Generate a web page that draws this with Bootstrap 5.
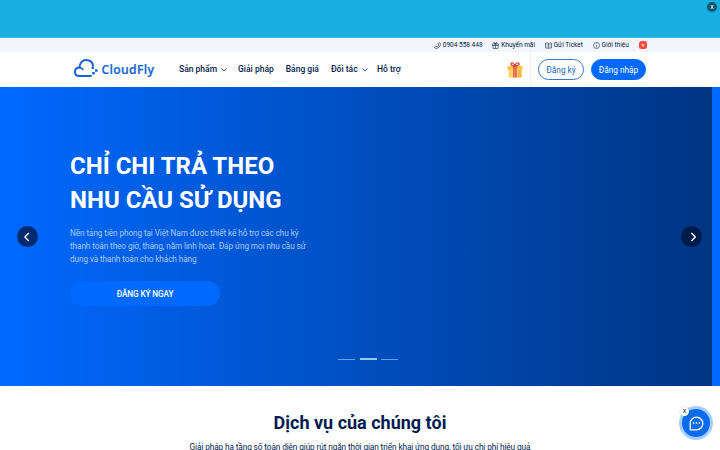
<!DOCTYPE html>
<html lang="vi">
  <head>
    <meta charset="utf-8" />
    <meta name="viewport" content="width=device-width, initial-scale=1" />
    <title>CloudFly</title>
    <link
      href="https://cdn.jsdelivr.net/npm/bootstrap@5.3.1/dist/css/bootstrap.min.css"
      rel="stylesheet"
    />
    <style>
      body {
        font-family: Roboto, "Noto Sans", sans-serif;
        color: #011b4f;
        height: 450px;
        overflow: hidden;
      }
      svg { display: block; flex: none; }
      .promo { height: 38px; background: #18aee1; border-bottom: 1px solid #45b6dc; }
      .promo-close {
        width: 10px; height: 10px; top: 2px; right: 3px;
        background: #0b5770; color: #fff; font-size: 7px; line-height: 10px;
      }
      .topbar { height: 14px; background: #f3f5fa; font-size: 6.5px; line-height: 14px; padding-right: 73.5px; gap: 9.7px; }
      .topbar a, .main-nav a { color: inherit; text-decoration: none; white-space: nowrap; }
      .topbar a { gap: 2px; }
      .flag { width: 8px; height: 8px; border-radius: 2.5px; background: #f94a49; }
      .header { height: 35px; padding: 0 74px 0 73px; }
      .brand { width: 106px; }
      .brand-logo { margin-top: -4px; }
      .brand-name { font: 600 12.2px/16px "Open Sans", sans-serif; letter-spacing: .3px; color: #1663d6; margin-left: 3.5px; -webkit-text-stroke: .2px #1663d6; }
      .main-nav { font-size: 8.5px; font-weight: 500; gap: 12px; }
      .main-nav .has-menu { gap: 4px; margin-right: -1px; }
      .main-nav .partner { margin-right: -2.5px; }
      .split { width: 1px; height: 35px; background: #f0f2f6; margin: 0 7px; }
      .pill { height: 21px; padding: 0; font-size: 8.25px; line-height: 20px; border-radius: 11px; }
      .pill-line { width: 46px; color: #1663b8; border-color: #3479c5; }
      .pill-fill { width: 55px; margin-left: 7px; background: #0069ff; color: #fff; border-color: #0069ff; }
      .hero { height: 298.5px; background: #0069ff; }
      .slide { width: 712px; height: 298.5px; background: linear-gradient(90deg, #0069ff, #003583); }
      .slide-text { padding: 62px 0 0 70px; }
      .slide-text h1 { font-size: 24px; line-height: 34px; font-weight: 700; margin-bottom: 10px; }
      .slide-text p { font-size: 8.25px; line-height: 13px; letter-spacing: -.11px; color: #a9c9fa; margin-bottom: 14.5px; }
      .cta { width: 150px; height: 25px; padding: 0; border: 0; border-radius: 13px; background: #0069ff; color: #fff; font-size: 8.25px; letter-spacing: -.13px; font-weight: 500; line-height: 26px; }
      .arrow { width: 21px; height: 21px; top: 139px; background: rgba(0, 15, 45, .68); }
      .arrow-prev { left: 17.4px; }
      .arrow-next { left: 681.4px; }
      .dashes { top: 271px; left: 338px; gap: 4.5px; }
      .dashes span { width: 17px; height: 1px; background: #6ca3ea; }
      .dashes .on { height: 2px; background: #8fcbe4; }
      .services h2 { font-size: 18px; line-height: 22px; font-weight: 700; margin: 26px 0 8px; }
      .services p { font-size: 8.25px; line-height: 11px; letter-spacing: -.11px; white-space: nowrap; }
      .chat { width: 34px; height: 34px; left: 679px; top: 406px; background: #a9ccff; }
      .chat-core { width: 28px; height: 28px; background: #0b6bed; }
      .chat-close { width: 9px; height: 9px; left: 1px; top: 1px; background: #fff; color: #222; font-size: 7px; line-height: 8px; box-shadow: 0 0 2px rgba(0, 0, 0, .25); }
    </style>
    <script src="https://cdn.jsdelivr.net/npm/bootstrap@5.3.1/dist/js/bootstrap.bundle.min.js"></script>
  </head>
  <body>
    <div class="promo position-relative">
      <span class="promo-close position-absolute rounded-circle text-center">x</span>
    </div>

    <div class="topbar d-flex justify-content-end align-items-center">
      <a href="#" class="d-flex align-items-center">
        <svg width="7" height="7" viewBox="0 0 14 14" fill="none" stroke="#273962" stroke-width="1.3"><path d="M10 1l3 2c0 6-4 10-10 10l-2-3 3-2 2 2c2-1 3-2 4-4L8 4z" /></svg>
        0904 558 448
      </a>
      <a href="#" class="d-flex align-items-center">
        <svg width="7" height="7" viewBox="0 0 14 14" fill="none" stroke="#273962" stroke-width="1.3"><path d="M1 4h12v3H1zM2 7v6h10V7M7 4v9M7 4C2 4 3 0 5 1q2 1 2 3c0-3 2-4 3-3s1 3-3 3" /></svg>
        Khuyến mãi
      </a>
      <a href="#" class="d-flex align-items-center">
        <svg width="7" height="7" viewBox="0 0 14 14" fill="none" stroke="#273962" stroke-width="1.3"><path d="M1 2h4l2 1 2-1h4v10H9l-2 1-2-1H1zM7 3v10M3 5h2M3 8h2M9 5h2M9 8h2" /></svg>
        Gửi Ticket
      </a>
      <a href="#" class="d-flex align-items-center">
        <svg width="7" height="7" viewBox="0 0 14 14" fill="none" stroke="#273962" stroke-width="1.3"><circle cx="7" cy="7" r="6" /><path d="M7 6v5M7 3v1.5" /></svg>
        Giới thiệu
      </a>
      <span class="flag d-flex align-items-center justify-content-center">
        <svg width="4" height="4" viewBox="0 0 10 10" fill="#ffe36b"><path d="M5 0l1.4 3.5L10 3.8 7.2 6.1 8.1 10 5 7.8 1.9 10l.9-3.9L0 3.8l3.6-.3z" /></svg>
      </span>
    </div>

    <header class="header d-flex align-items-center bg-white">
      <a href="#" class="brand d-flex align-items-center text-decoration-none">
        <svg class="brand-logo" width="25" height="20" viewBox="0 0 25 20" fill="none" stroke="#1663d6" stroke-width="2" stroke-linecap="round"><path d="M18 18H6C3 18 2 16 2 14c0-3 2-4.5 4.5-4.5C6.500 5 9.500 2 13 2c4 0 6.500 2.500 7 5.500" /><path d="M6 9.500c2 0 3 .7 4 2" stroke-width="1.6" /><path d="M18.600 8.600h2.400V11h-2.400zM22 11.200h2.600v2.600H22zM19.200 14h2.600v2.600h-2.600z" fill="#1663d6" stroke="none" /></svg>
        <span class="brand-name">CloudFly</span>
      </a>
      <nav class="main-nav d-flex align-items-center">
        <a href="#" class="has-menu d-flex align-items-center">Sản phẩm <svg width="6" height="5" viewBox="0 0 6 5" fill="none" stroke="#34456c" stroke-width=".9"><path d="M.5 1.5L3 4l2.5-2.5" /></svg></a>
        <a href="#">Giải pháp</a>
        <a href="#">Bảng giá</a>
        <a href="#" class="has-menu partner d-flex align-items-center">Đối tác <svg width="6" height="5" viewBox="0 0 6 5" fill="none" stroke="#34456c" stroke-width=".9"><path d="M.5 1.5L3 4l2.5-2.5" /></svg></a>
        <a href="#">Hỗ trợ</a>
      </nav>
      <div class="d-flex align-items-center ms-auto">
        <svg width="16" height="16" viewBox="0 0 32 32"><path d="M1 8h30v8H1z" fill="#ffc64b" /><path d="M3 15h26v16H3z" fill="#ffd36b" /><path d="M22 16h7v15h-7z" fill="#f7b64b" /><path d="M12 8h8v23h-8z" fill="#f2704f" /><path d="M16 8C5 8 7 0 11 2q4 2 5 6c1-5 4-7 7-6s2 6-7 6" fill="none" stroke="#d93e35" stroke-width="2.5" /></svg>
        <span class="split"></span>
        <a href="#" class="btn pill pill-line">Đăng ký</a>
        <a href="#" class="btn pill pill-fill">Đăng nhập</a>
      </div>
    </header>

    <section class="hero position-relative">
      <div class="slide">
        <div class="slide-text text-white">
          <h1>CHỈ CHI TRẢ THEO<br />NHU CẦU SỬ DỤNG</h1>
          <p>Nền tảng tiên phong tại Việt Nam được thiết kế hỗ trợ các chu kỳ<br />thanh toán theo giờ, tháng, năm linh hoạt. Đáp ứng mọi nhu cầu sử<br />dụng và thanh toán cho khách hàng</p>
          <a href="#" class="btn cta">ĐĂNG KÝ NGAY</a>
        </div>
      </div>
      <span class="arrow arrow-prev position-absolute rounded-circle d-flex align-items-center justify-content-center">
        <svg width="8" height="10" viewBox="0 0 8 10" fill="none" stroke="#fff" stroke-width="1.4"><path d="M4.8 1L.9 5l3.9 4" /></svg>
      </span>
      <span class="arrow arrow-next position-absolute rounded-circle d-flex align-items-center justify-content-center">
        <svg width="8" height="10" viewBox="0 0 8 10" fill="none" stroke="#fff" stroke-width="1.4"><path d="M3.4 1l3.9 4-3.9 4" /></svg>
      </span>
      <div class="dashes position-absolute d-flex align-items-center">
        <span></span><span class="on"></span><span></span>
      </div>
    </section>

    <section class="services text-center">
      <h2>Dịch vụ của chúng tôi</h2>
      <p>Giải pháp hạ tầng số toàn diện giúp rút ngắn thời gian triển khai ứng dụng, tối ưu chi phí hiệu quả</p>
    </section>

    <div class="chat position-absolute rounded-circle d-flex align-items-center justify-content-center">
      <div class="chat-core rounded-circle d-flex align-items-center justify-content-center">
        <svg width="15" height="15" viewBox="0 0 15 15" fill="none" stroke="#fff" stroke-width="1.3"><path d="M1.2 13.8V7.5a6.3 6.3 0 1 1 6.3 6.3z" stroke-linejoin="round" /><path d="M4 7h1.4M6.8 7h1.4M9.6 7H11" /></svg>
      </div>
      <span class="chat-close position-absolute rounded-circle text-center">x</span>
    </div>
  </body>
</html>
